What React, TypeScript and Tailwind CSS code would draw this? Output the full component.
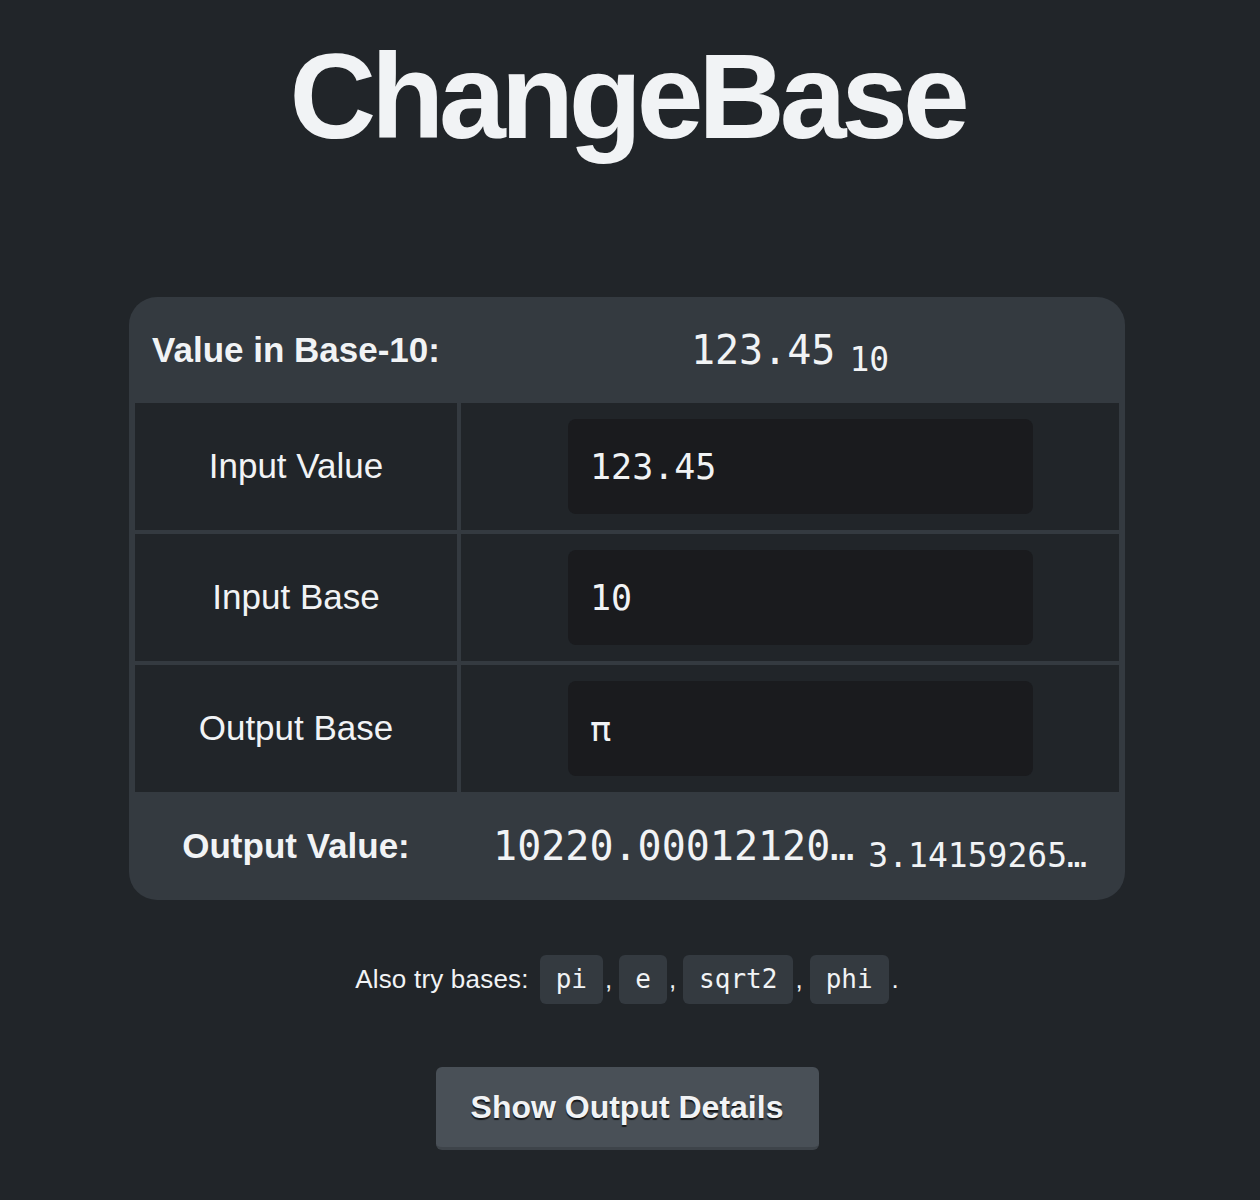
import React from "react";

const mono = "font-['DejaVu_Sans_Mono','Liberation_Mono',monospace]";

function InputRow({ label, value }: { label: string; value: string }) {
  return (
    <>
      <div className="h-[127px] bg-[#212529] flex items-center justify-center text-[35px]">
        {label}
      </div>
      <div className="h-[127px] bg-[#212529] flex items-center">
        <input
          readOnly
          value={value}
          className={`ml-[107px] w-[465px] h-[95px] rounded-[8px] bg-[#1a1b1e] pl-[22px] text-[35px] text-[#f1f3f5] outline-none ${mono}`}
        />
      </div>
    </>
  );
}

function Chip({ children }: { children: React.ReactNode }) {
  return (
    <span className={`h-[49px] px-[16px] rounded-[6px] bg-[#343a40] flex items-center text-[26px] ${mono}`}>
      {children}
    </span>
  );
}

function Comma() {
  return <span className="ml-[2px] mr-[7px]">,</span>;
}

export default function App() {
  return (
    <div className="min-h-[1200px] bg-[#212529] text-[#f1f3f5] font-['Liberation_Sans',Arial,sans-serif] flex flex-col items-center pr-[6px]">
      <h1 className="mt-[36px] text-[120px] leading-none font-bold tracking-[-5.2px]">ChangeBase</h1>

      <div className="mt-[141px] w-[996px] rounded-[28px] bg-[#343a40] px-[6px]">
        <div className="grid grid-cols-[322px_658px] gap-x-[4px] h-[106px] items-center">
          <div className="text-center font-bold text-[35px]">Value in Base-10:</div>
          <div className={`flex justify-center items-baseline ${mono}`}>
            <span className="text-[40px]">123.45</span>
            <span className="text-[33px] ml-[14px] relative top-[7px]">10</span>
          </div>
        </div>
        <div className="grid grid-cols-[322px_658px] gap-[4px]">
          <InputRow label="Input Value" value="123.45" />
          <InputRow label="Input Base" value="10" />
          <InputRow label="Output Base" value="π" />
        </div>
        <div className="grid grid-cols-[322px_658px] gap-x-[4px] h-[108px] items-center">
          <div className="text-center font-bold text-[35px]">Output Value:</div>
          <div className={`flex justify-center items-baseline ${mono}`}>
            <span className="text-[40px]">10220.00012120…</span>
            <span className="text-[33px] ml-[14px] relative top-[7px]">3.14159265…</span>
          </div>
        </div>
      </div>

      <div className="mt-[55px] flex items-center text-[26px]">
        <span className="mr-[11px] tracking-[0.2px]">Also try bases:</span>
        <Chip>pi</Chip>
        <Comma />
        <Chip>e</Chip>
        <Comma />
        <Chip>sqrt2</Chip>
        <Comma />
        <Chip>phi</Chip>
        <span className="ml-[3px]">.</span>
      </div>

      <button className="mt-[63px] w-[383px] h-[83px] rounded-[6px] bg-[#495057] border-b-[3px] border-[#3e444a] text-[32px] font-bold text-[#f1f3f5] [text-shadow:0_2px_1px_rgba(0,0,0,0.7)]">
        Show Output Details
      </button>
    </div>
  );
}
